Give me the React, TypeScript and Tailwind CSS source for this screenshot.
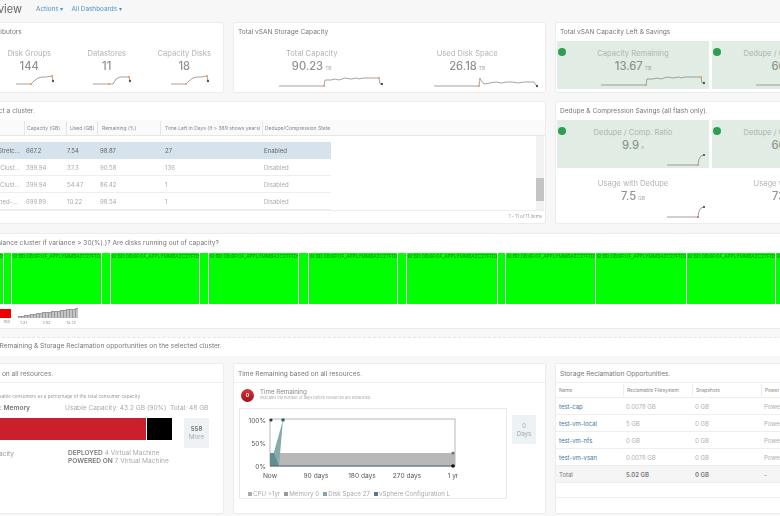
import React from 'react';

// Sparkline: grey trend, orange marks, dark last value
type SparkProps = { w: number; line: string; marks: [number, number][]; end: [number, number] };

const Spark: React.FC<SparkProps> = ({ w, line, marks, end }) => (
  <svg width={w} height={12} className="block shrink-0">
    <polyline points={line} fill="none" stroke="#8c8c8c" strokeWidth="0.8" />
    {marks.map(([x, y], i) => (
      <circle key={i} cx={x} cy={y} r="1.1" fill="#f0a050" />
    ))}
    <circle cx={end[0]} cy={end[1]} r="1.2" fill="#555" />
  </svg>
);

const small = (
  <Spark w={38} line="0,10 15,10 18,7 22,4 26,3 30,3 36,2 37,7" marks={[[15, 10], [36, 2]]} end={[37, 7]} />
);
const small2 = (
  <Spark w={38} line="0,10 15,10 20,10 23,5 27,3 36,3 37,7" marks={[[16, 10], [36, 3]]} end={[37, 7]} />
);
const wideA = (
  <Spark
    w={104}
    line="0,10 45,10 46,4 52,4 56,3 60,4 66,2 72,3 78,2 80,3 84,2 100,2 101,8 103,8"
    marks={[[45, 10], [100, 2]]}
    end={[103, 8]}
  />
);
const wideB = (
  <Spark
    w={104}
    line="0,10 45,10 46,3 50,8 56,7 62,6 68,7 72,6 78,6 84,7 90,6 100,6 102,9"
    marks={[[45, 10], [46, 3]]}
    end={[103, 10]}
  />
);
const rise = (color: string) => (
  <svg width={38} height={12} className="block shrink-0">
    <polyline points="0,11 31,11 32,5 34,2 37,1" fill="none" stroke="#8c8c8c" strokeWidth="0.8" />
    <circle cx="31" cy="11" r="1.1" fill={color} />
    <circle cx="37" cy="1" r="1.1" fill="#555" />
  </svg>
);

const Card: React.FC<{ title: string; className?: string; titleClass?: string; children?: React.ReactNode }> = ({
  title,
  className,
  titleClass = 'pt-[2px]',
  children,
}) => (
  <div className={`flex flex-col overflow-hidden rounded-[2px] border border-[#ececec] bg-white ${className ?? ''}`}>
    <div className={`flex h-[18px] shrink-0 items-center whitespace-nowrap pl-[4px] text-[6.6px] text-[#777] ${titleClass}`}>{title}</div>
    {children}
  </div>
);

const Stat: React.FC<{ label: string; value: string; unit?: string; sparkClass?: string; spark?: React.ReactNode }> = ({
  label,
  value,
  unit,
  sparkClass,
  spark,
}) => (
  <div className="flex flex-1 flex-col items-center whitespace-nowrap pt-[8px]">
    <div className="text-[7.6px] leading-[10px] text-[#b4b4b4]">{label}</div>
    <div className="text-[11.2px] font-medium leading-[14px] text-[#929292]">
      {value}
      {unit && <span className="ml-[2px] text-[5px] font-normal text-[#aaa]">{unit}</span>}
    </div>
    <div className={sparkClass}>{spark}</div>
  </div>
);

const Tile: React.FC<{ label: string; value: string; unit?: string; spark?: React.ReactNode }> = ({ label, value, unit, spark }) => (
  <div className="relative flex h-[48px] flex-col items-center whitespace-nowrap bg-[#e1ece4] pt-[8px]">
    <span className="absolute left-[1px] top-[7px] h-[8px] w-[8px] rounded-full bg-[#2f9e50]" />
    <div className="text-[7.6px] leading-[10px] text-[#adb7b0]">{label}</div>
    <div className="text-[11.2px] font-medium leading-[14px] text-[#8c9690]">
      {value}
      {unit && <span className="ml-[2px] text-[5px] font-normal text-[#a0a8a3]">{unit}</span>}
    </div>
    <div className="mt-auto mb-[3px] mr-[4px] self-end">{spark}</div>
  </div>
);

const clusters = [
  ['Production-Site-A-All-Flash-Stretched-Cluster', '667.2', '7.54', '98.87', '27', 'Enabled'],
  ['Production-Site-One-Hybrid-Cluster-1', '399.94', '37.3', '90.58', '136', 'Disabled'],
  ['Production-Site-Two-Hybrid-Cluster-2', '399.94', '54.47', '86.42', '1', 'Disabled'],
  ['Production-Site-Main-Combined-Cluster', '699.89', '10.22', '98.54', '1', 'Disabled'],
];

// heat map tiles, width in px
const heatTiles = [88, 7, 89, 8, 88, 8, 89, 9, 88, 8, 90, 7, 89, 90, 88, 90];

const tableCols = 'grid grid-cols-[111px_42px_31px_63px_102px_69px]';
const vmCols = 'grid grid-cols-[67px_69px_69px_105px]';

// left padding per column of the cluster table
const cellPad = ['pl-[4px] pr-[4px]', 'pl-[2px]', 'pl-[1px]', 'pl-[3px]', 'pl-[5px]', 'pl-[2px]'];
const headPad = ['pl-[4px]', 'pl-[2px]', 'pl-[3px]', 'pl-[4px]', 'pl-[4px]', 'pl-[2px]'];

const vms = [
  ['test-cap', '0.0078 GB', '0 GB', 'Powered On'],
  ['test-vm-local', '5 GB', '0 GB', 'Powered On'],
  ['test-vm-nfs', '0 GB', '0 GB', 'Powered On'],
  ['test-vm-vsan', '0.0078 GB', '0 GB', 'Powered On'],
];

const legendSteps = [1, 1, 2, 2, 3, 3, 4, 4, 5, 5, 5, 6, 6, 6, 7, 7, 8, 8, 8, 9];

export default function App() {
  return (
    <div className="h-[516px] w-[780px] overflow-hidden bg-[#f7f7f7]">
      <div className="ml-[-98px] w-[975px] pl-[10px] font-['Inter',sans-serif] antialiased blur-[0.3px]">
        {/* Header */}
        <div className="flex h-[22px] items-center whitespace-nowrap pb-[3px]">
          <div className="ml-[-10px] w-[120px] text-right text-[11px] text-[#666]">vSAN Overview</div>
          <div className="ml-[14px] text-[6.4px] text-[#4c93c4]">Actions ▾</div>
          <div className="ml-[8px] text-[6.4px] text-[#4c93c4]">All Dashboards ▾</div>
        </div>

        {/* Row 1 */}
        <div className="grid h-[71px] grid-cols-[312px_313px_312px] gap-x-[9px]">
          <Card title="Total vSAN Capacity Contributors">
            <div className="flex flex-1">
              <Stat label="Hosts" value="24" sparkClass="ml-[11px] mt-[1px]" spark={small} />
              <Stat label="Disk Groups" value="144" sparkClass="ml-[11px] mt-[1px]" spark={small} />
              <Stat label="Datastores" value="11" sparkClass="ml-[11px] mt-[1px]" spark={small2} />
              <Stat label="Capacity Disks" value="18" sparkClass="ml-[11px] mt-[1px]" spark={small} />
            </div>
          </Card>
          <Card title="Total vSAN Storage Capacity">
            <div className="flex flex-1">
              <Stat label="Total Capacity" value="90.23" unit="TB" sparkClass="ml-[38px] mt-[1px]" spark={wideA} />
              <Stat label="Used Disk Space" value="26.18" unit="TB" sparkClass="ml-[38px] mt-[1px]" spark={wideB} />
            </div>
          </Card>
          <Card title="Total vSAN Capacity Left & Savings">
            <div className="grid grid-cols-[152px_152px] gap-x-[3px] px-[1px]">
              <Tile label="Capacity Remaining" value="13.67" unit="TB" spark={wideA} />
              <Tile label="Dedupe / Comp. Savings" value="66.4" unit="TB" spark={wideA} />
            </div>
          </Card>
        </div>

        {/* Row 2 */}
        <div className="mt-[8px] grid h-[123px] grid-cols-[634px_312px] gap-x-[9px]">
          <Card title="Cluster Capacity List: Select a cluster.">
            <div className={`${tableCols} h-[16px] shrink-0 items-center border-b border-[#e6e6e6] bg-[#fafafa] text-[5px] text-[#888]`}>
              {['Cluster Name', 'Capacity (GB)', 'Used (GB)', 'Remaining (%)', 'Time Left in Days (If > 369 shows years)', 'Dedupe/Compression State'].map((h, i) => (
                <div key={h} className={`truncate border-l border-[#e6e6e6] leading-[14px] first:border-l-0 ${headPad[i]}`}>
                  {h}
                </div>
              ))}
            </div>
            <div className="flex min-h-0 flex-1">
              <div className="flex-1 pt-[6px]">
                {clusters.map((row, i) => (
                  <div
                    key={i}
                    className={`${tableCols} h-[17px] w-[418px] items-center text-[6px] ${
                      i === 0 ? 'bg-[#d7e3ec] text-[#666]' : 'border-b border-[#eee] text-[#aaa]'
                    }`}
                  >
                    {row.map((cell, j) => (
                      <div key={j} className={`truncate ${cellPad[j]}`}>
                        {cell}
                      </div>
                    ))}
                  </div>
                ))}
              </div>
              <div className="flex w-[8px] shrink-0 flex-col bg-[#f2f2f2] pt-[42px]">
                <div className="h-[23px] bg-[#c4c4c4]" />
              </div>
              <div className="w-[1px] shrink-0" />
            </div>
            <div className="flex h-[13px] shrink-0 items-center justify-end border-t border-[#eee] pr-[3px] text-[4.5px] text-[#999]">
              1 - 11 of 11 items
            </div>
          </Card>
          <Card title="Dedupe & Compression Savings (all flash only).">
            <div className="grid grid-cols-[152px_152px] gap-x-[3px] px-[1px]">
              <Tile label="Dedupe / Comp. Ratio" value="9.9" unit="x" spark={rise('#f0a050')} />
              <Tile label="Dedupe / Comp. Savings" value="66.4" unit="TB" spark={rise('#f0a050')} />
              <div className="flex flex-col items-center whitespace-nowrap pt-[11px]">
                <div className="text-[7.6px] leading-[10px] text-[#b4b4b4]">Usage with Dedupe</div>
                <div className="text-[11.2px] font-medium leading-[14px] text-[#929292]">
                  7.5<span className="ml-[2px] text-[5px] font-normal text-[#aaa]">GB</span>
                </div>
                <div className="mr-[4px] mt-[1px] self-end">{rise('#e8705a')}</div>
              </div>
              <div className="flex flex-col items-center whitespace-nowrap pt-[11px]">
                <div className="text-[7.6px] leading-[10px] text-[#b4b4b4]">Usage w/o Dedupe</div>
                <div className="text-[11.2px] font-medium leading-[14px] text-[#929292]">
                  73.8<span className="ml-[2px] text-[5px] font-normal text-[#aaa]">GB</span>
                </div>
              </div>
            </div>
          </Card>
        </div>

        {/* Row 3 */}
        <Card title="Do hosts need time to rebalance cluster if variance > 30(%).)? Are disks running out of capacity?" className="mt-[9px] h-[96px] w-[955px]">
          <div className="mt-[1px] flex h-[51px] shrink-0 gap-[1px] pl-[2px]">
            {heatTiles.map((w, i) => (
              <div key={i} className="h-full overflow-hidden whitespace-nowrap bg-[#00ff00] pl-[1px] text-[4.8px] leading-[7px] text-[#0a7a0a]" style={{ width: w }}>
                {w > 20 ? '6I:BD:0B:6F:0F_APPLYMMBA2C27F1D2' : ''}
              </div>
            ))}
          </div>
          <div className="ml-[68px] mt-[3px] flex items-start">
            <div className="w-[30px]">
              <div className="mt-[2px] h-[9px] bg-[#f00000]" />
              <div className="mt-[1px] pr-[1px] text-right text-[4px] text-[#888]">100</div>
            </div>
            <div className="ml-[7px] w-[60px]">
              <div className="flex h-[11px] items-end">
                {legendSteps.map((h, i) => (
                  <div key={i} className="flex-1 border-l border-t border-[#999] bg-[#c4c4c4]" style={{ height: h + 1 }} />
                ))}
              </div>
              <div className="mt-[2px] flex justify-between px-[2px] text-[4px] text-[#888]">
                <span>1.31</span>
                <span>7.52</span>
                <span>13.72</span>
              </div>
            </div>
          </div>
        </Card>

        {/* Section band */}
        <div className="mt-[8px] flex h-[19px] w-[955px] items-center whitespace-nowrap border-t border-dashed border-[#e4e4e4] bg-white pl-[4px] text-[6.6px] text-[#777]">
          <span className="ml-[-2px]">vSAN Capacity Stats: Time Remaining &amp; Storage Reclamation opportunities on the selected cluster.</span>
        </div>

        {/* Row 4 */}
        <div className="mt-[7px] grid h-[151px] grid-cols-[312px_313px_312px] gap-x-[9px]">
          <Card title="Capacity Remaining based on all resources." titleClass="pt-[3px]">
            <div className="flex-1 border-t border-[#eee] text-[6.6px] whitespace-nowrap">
              <div className="w-[227px] pt-[11px] text-right text-[4.6px] leading-[6px] text-[#999]">
                Shows the remaining usable consumers as a percentage of the total consumer capacity
              </div>
              <div className="mt-[4px] flex h-[10px] items-center text-[#aaa]">
                <div className="w-[117px] text-right font-semibold text-[#777]">Most Constrained: Memory</div>
                <div className="ml-[35px] w-[105px]">Usable Capacity: 43.2 GB (90%)</div>
                <div>Total: 48 GB</div>
              </div>
              <div className="mt-[4px] flex items-start pl-[4px]">
                <div className="h-[22px] w-[229px] bg-[#cb1f2b]" />
                <div className="ml-[1px] h-[22px] w-[25px] bg-black" />
                <div className="ml-[12px] flex h-[30px] w-[25px] flex-col items-center justify-center bg-[#edf2f5] text-[6.2px] leading-[8px]">
                  <span className="font-semibold text-[#777]">558</span>
                  <span className="text-[#aaa]">More</span>
                </div>
              </div>
              <div className="mt-[1px] flex items-start">
                <div className="w-[101px] pt-[1px] text-right text-[#999]">Remaining Capacity</div>
                <div className="ml-[54px] leading-[8px] text-[#aaa]">
                  <div>
                    <b className="font-semibold text-[#777]">DEPLOYED</b> 4 Virtual Machine
                  </div>
                  <div>
                    <b className="font-semibold text-[#777]">POWERED ON</b> 7 Virtual Machine
                  </div>
                </div>
              </div>
            </div>
          </Card>

          <Card title="Time Remaining based on all resources." titleClass="pt-[3px]">
            <div className="flex-1 border-t border-[#eee] px-[5px]">
              <div className="flex h-[25px] items-start pl-[2px] pt-[5px]">
                <div className="mt-[1px] flex h-[13px] w-[13px] items-center justify-center rounded-full bg-gradient-to-b from-[#d8343a] to-[#a01018] text-[5px] font-bold text-white">0</div>
                <div className="ml-[6px]">
                  <div className="text-[6.2px] leading-[7px] text-[#888]">Time Remaining</div>
                  <div className="text-[3.8px] leading-[5px] text-[#aaa]">Indicates the number of days before resources are exhausted.</div>
                </div>
              </div>
              <div className="flex items-start">
                <div className="h-[91px] w-[268px] shrink-0 overflow-hidden border border-[#eaeaea] bg-white">
                  <svg width={266} height={72} className="block text-[6.6px]">
                    <rect x="30" y="10" width="185" height="47" fill="#fff" stroke="#999" strokeWidth="0.7" />
                    <rect x="30" y="44" width="185" height="13" fill="#b8b8b8" />
                    <polygon points="30,57 43,11 39,57" fill="#84aaae" />
                    <polygon points="30,44 34,44 39,57 30,57" fill="#648d92" />
                    <line x1="30" y1="57" x2="215" y2="57" stroke="#4f6470" strokeWidth="1" />
                    <circle cx="31" cy="11" r="1.6" fill="#333" />
                    <circle cx="43" cy="11" r="1.8" fill="#36606a" />
                    <circle cx="213" cy="44" r="1.6" fill="#777" />
                    <circle cx="213" cy="57" r="1.8" fill="#111" />
                    <g fill="#555">
                      <text x="26" y="14" textAnchor="end">100%</text>
                      <text x="26" y="37" textAnchor="end">50%</text>
                      <text x="26" y="60" textAnchor="end">0%</text>
                      <text x="30" y="69" textAnchor="middle">Now</text>
                      <text x="76" y="69" textAnchor="middle">90 days</text>
                      <text x="122" y="69" textAnchor="middle">180 days</text>
                      <text x="167" y="69" textAnchor="middle">270 days</text>
                      <text x="213" y="69" textAnchor="middle">1 yr</text>
                    </g>
                  </svg>
                  <div className="mt-[9px] flex gap-[4px] whitespace-nowrap pl-[8px] text-[6.2px] leading-[8px] text-[#aaa]">
                    <span><i className="mr-[1px] inline-block h-[4px] w-[4px] bg-[#aaa]" />CPU &gt;1yr</span>
                    <span><i className="mr-[1px] inline-block h-[4px] w-[4px] bg-[#999]" />Memory 0</span>
                    <span><i className="mr-[1px] inline-block h-[4px] w-[4px] bg-[#7fa8a8]" />Disk Space 27</span>
                    <span><i className="mr-[1px] inline-block h-[4px] w-[4px] bg-[#557a8c]" />vSphere Configuration L</span>
                  </div>
                </div>
                <div className="ml-[5px] mt-[7px] flex h-[29px] w-[24px] flex-col items-center justify-center bg-[#edf2f5] text-[6.2px] leading-[8px] text-[#aaa]">
                  <span>0</span>
                  <span>Days</span>
                </div>
              </div>
            </div>
          </Card>

          <Card title="Storage Reclamation Opportunities." titleClass="pt-[3px]">
            <div className={`${vmCols} h-[16px] shrink-0 items-center border-y border-[#eee] text-[4.8px] text-[#888]`}>
              {['Name', 'Reclamable Filesystem', 'Snapshots', 'Power State'].map((h) => (
                <div key={h} className="truncate border-l border-[#eee] pl-[3px] leading-[12px] first:border-l-0">
                  {h}
                </div>
              ))}
            </div>
            {vms.map((row) => (
              <div key={row[0]} className={`${vmCols} h-[17px] shrink-0 items-center border-b border-[#eee] text-[6px] text-[#b0b0b0]`}>
                <div className="pl-[3px] text-[#4a74a0]">{row[0]}</div>
                <div className="pl-[3px]">{row[1]}</div>
                <div className="pl-[3px]">{row[2]}</div>
                <div className="pl-[3px]">{row[3]}</div>
              </div>
            ))}
            <div className={`${vmCols} h-[17px] shrink-0 items-center border-b border-[#eee] bg-[#f5f5f5] text-[6px] text-[#777]`}>
              <div className="pl-[3px]">Total</div>
              <div className="pl-[3px] font-semibold">5.02 GB</div>
              <div className="pl-[3px] font-semibold">0 GB</div>
              <div className="pl-[3px]">-</div>
            </div>
            <div className="h-[15px] shrink-0 border-b border-[#eee]" />
          </Card>
        </div>
      </div>
    </div>
  );
}
